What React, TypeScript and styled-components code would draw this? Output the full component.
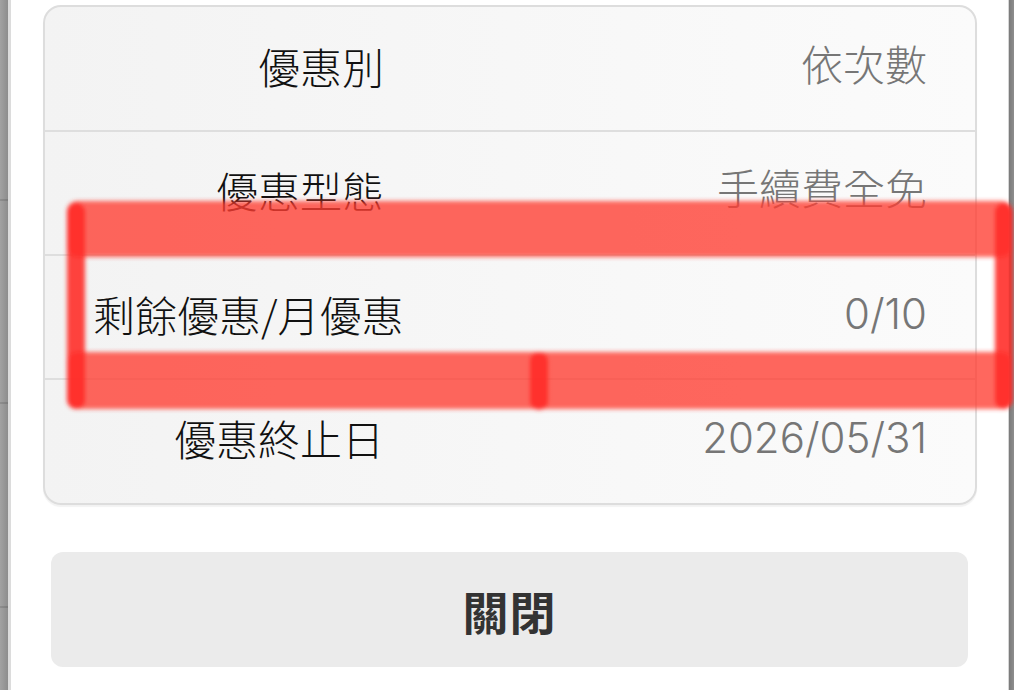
import React from "react";
import styled, { createGlobalStyle } from "styled-components";

const GlobalStyle = createGlobalStyle`
  html, body {
    margin: 0;
    padding: 0;
    background: #ffffff;
  }
  body {
    font-family: "Noto Sans CJK TC", "Noto Sans", sans-serif;
  }
`;

type Item = { label: string; value: string };

const items: Item[] = [
  { label: "優惠別", value: "依次數" },
  { label: "優惠型態", value: "手續費全免" },
  { label: "剩餘優惠/月優惠", value: "0/10" },
  { label: "優惠終止日", value: "2026/05/31" },
];

const App: React.FC = () => {
  return (
    <>
      <GlobalStyle />
      <Screen>
        <Backdrop />
        <Sheet>
          <Card>
            {items.map((item, i) => (
              <Row key={item.label} $last={i === items.length - 1}>
                <Label>{item.label}</Label>
                <Value>{item.value}</Value>
              </Row>
            ))}
          </Card>
          <CloseButton type="button">關閉</CloseButton>
        </Sheet>
        <RightEdge />
        <Marker />
      </Screen>
    </>
  );
};

export default App;

// hand-drawn highlighter annotation over the third row
const Marker: React.FC = () => (
  <MarkerLayer viewBox="0 0 1014 690" width="1014" height="690">
    <defs>
      <filter id="soft" x="-5%" y="-5%" width="110%" height="110%">
        <feGaussianBlur stdDeviation="2" />
      </filter>
    </defs>
    <g filter="url(#soft)">
      <g fill="rgb(255,59,48)" fillOpacity="0.78">
        <rect x="67" y="201" width="945" height="56" rx="10" />
        <rect x="67" y="352" width="945" height="57" rx="10" />
      </g>
      <g fill="rgb(255,42,36)" fillOpacity="0.88">
        <rect x="67" y="203" width="18" height="206" rx="9" />
        <rect x="995" y="203" width="18" height="206" rx="9" />
        <rect x="530" y="352" width="18" height="58" rx="9" />
      </g>
    </g>
  </MarkerLayer>
);

const Screen = styled.div`
  position: relative;
  display: flex;
  width: 1014px;
  height: 690px;
  overflow: hidden;
`;

const Backdrop = styled.div`
  width: 8px;
  flex-shrink: 0;
  background:
    linear-gradient(
      to bottom,
      transparent 199px,
      rgba(0, 0, 0, 0.12) 199px,
      rgba(0, 0, 0, 0.12) 201px,
      transparent 201px,
      transparent 402px,
      rgba(0, 0, 0, 0.12) 402px,
      rgba(0, 0, 0, 0.12) 404px,
      transparent 404px,
      transparent 606px,
      rgba(0, 0, 0, 0.12) 606px,
      rgba(0, 0, 0, 0.12) 608px,
      transparent 608px
    ),
    linear-gradient(to right, #a2a2a2, #8d8d8d);
`;

const Sheet = styled.div`
  flex: 1;
  display: flex;
  flex-direction: column;
  background: #ffffff;
  border-left: 3px solid #dcdcdc;
  border-right: 1px solid #d6d6d6;
  padding: 5px 31px 0 32px;
`;

const RightEdge = styled.div`
  width: 5px;
  flex-shrink: 0;
  background: linear-gradient(to right, #7a7a7a, #8e8e8e);
`;

const Card = styled.div`
  border: 2px solid #dddddd;
  border-radius: 18px;
  padding: 1px 0 1px;
  background: linear-gradient(to right, #f3f3f3, #fbfbfb);
  box-shadow: 0 2px 1px rgba(0, 0, 0, 0.05);
  overflow: hidden;
`;

const Row = styled.div<{ $last?: boolean }>`
  display: grid;
  grid-template-columns: 291px 1fr;
  align-items: center;
  height: 116px;
  padding: 0 48px 6px 48px;
  border-bottom: ${({ $last }) => ($last ? "none" : "2px solid #dedede")};
  font-size: 42px;
  font-weight: 300;
  line-height: 1;
`;

const Label = styled.span`
  color: #111111;
  text-align: right;
  white-space: nowrap;
`;

const Value = styled.span`
  color: #767676;
  font-family: "Inter", "Noto Sans CJK TC", sans-serif;
  text-align: right;
  white-space: nowrap;
`;

const CloseButton = styled.button`
  margin: 47px 9px 0 8px;
  height: 115px;
  border: none;
  border-radius: 12px;
  background: #ebebeb;
  color: #333333;
  font-family: "Noto Sans CJK TC", "Noto Sans", sans-serif;
  font-size: 46px;
  font-weight: 700;
  letter-spacing: 1px;
  cursor: pointer;
`;

const MarkerLayer = styled.svg`
  position: absolute;
  top: 0;
  left: 0;
  pointer-events: none;
`;
